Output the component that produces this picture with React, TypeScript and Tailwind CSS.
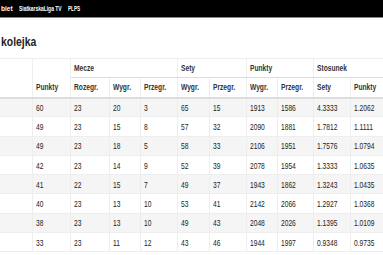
const COLS = [32, 38, 39, 31, 37, 32, 37, 31, 36, 37, 40];

const ROWS: string[][] = [
  ["60", "23", "20", "3", "65", "15", "1913", "1586", "4.3333", "1.2062"],
  ["49", "23", "15", "8", "57", "32", "2090", "1881", "1.7812", "1.1111"],
  ["49", "23", "18", "5", "58", "33", "2106", "1951", "1.7576", "1.0794"],
  ["42", "23", "14", "9", "52", "39", "2078", "1954", "1.3333", "1.0635"],
  ["41", "22", "15", "7", "49", "37", "1943", "1862", "1.3243", "1.0435"],
  ["40", "23", "13", "10", "53", "41", "2142", "2066", "1.2927", "1.0368"],
  ["38", "23", "13", "10", "49", "43", "2048", "2026", "1.1395", "1.0109"],
  ["33", "23", "11", "12", "43", "46", "1944", "1997", "0.9348", "0.9735"],
];

const SUB = ["Rozegr.", "Wygr.", "Przegr.", "Wygr.", "Przegr.", "Wygr.", "Przegr.", "Sety", "Punkty"];

// the site uses a condensed face; squeeze a regular one to match
function Narrow({ children }: { children: React.ReactNode }) {
  return <span className="inline-block origin-left scale-x-[0.74] whitespace-nowrap">{children}</span>;
}

export default function App() {
  return (
    <div
      className="w-[383px] h-[255px] overflow-hidden bg-white text-[#333]"
      style={{ fontFamily: '"Liberation Sans", Arial, sans-serif' }}
    >
      {/* top nav strip */}
      <nav className="flex h-[18px] items-center border-b border-[#888] bg-black pl-px text-[6.5px] font-bold text-white">
        <span className="w-[13px] whitespace-nowrap">biet</span>
        <span className="ml-[5px] w-[45px] whitespace-nowrap">
          <span className="inline-block origin-left scale-x-[0.76]">SiatkarskaLiga TV</span>
        </span>
        <span className="ml-[4px] w-[13px] whitespace-nowrap">
          <span className="inline-block origin-left scale-x-[0.72]">PLPS</span>
        </span>
      </nav>

      <h2 className="mt-[17px] h-[23px] pl-px text-[13px] font-bold leading-[14px] text-[#222]">
        <span className="inline-block origin-left scale-x-[0.8]">kolejka</span>
      </h2>

      <table className="w-[390px] table-fixed border-collapse text-[9px] leading-[10px]">
        <colgroup>
          {COLS.map((w, i) => (
            <col key={i} style={{ width: w }} />
          ))}
        </colgroup>
        <thead className="text-[#333]">
          <tr className="h-[19px]">
            <th rowSpan={2} className="border border-[#eee] border-l-0 border-b-2 border-b-[#ddd]" />
            <th
              rowSpan={2}
              className="border border-[#eee] border-b-2 border-b-[#ddd] px-[3px] pb-[5px] text-left align-bottom font-semibold"
            >
              <Narrow>Punkty</Narrow>
            </th>
            <th colSpan={3} className="border border-[#eee] border-b-[#ddd] px-[3px] text-left font-semibold">
              <Narrow>Mecze</Narrow>
            </th>
            <th colSpan={2} className="border border-[#eee] border-b-[#ddd] px-[3px] text-left font-semibold">
              <Narrow>Sety</Narrow>
            </th>
            <th colSpan={2} className="border border-[#eee] border-b-[#ddd] px-[3px] text-left font-semibold">
              <Narrow>Punkty</Narrow>
            </th>
            <th colSpan={2} className="border border-[#eee] border-b-[#ddd] px-[3px] text-left font-semibold">
              <Narrow>Stosunek</Narrow>
            </th>
          </tr>
          <tr className="h-[20px]">
            {SUB.map((s, i) => (
              <th
                key={i}
                className="border border-[#eee] border-b-2 border-b-[#ddd] px-[3px] text-left font-semibold"
              >
                <Narrow>{s}</Narrow>
              </th>
            ))}
          </tr>
        </thead>
        <tbody className="text-[#222]">
          {ROWS.map((r, i) => (
            <tr key={i} className={`h-[19.3px] ${i % 2 === 0 ? "bg-[#f5f5f5]" : "bg-white"}`}>
              <td className="border border-[#eee] border-l-0" />
              {r.map((v, j) => (
                <td key={j} className="border border-[#eee] px-[3px] pt-px">
                  <Narrow>{v}</Narrow>
                </td>
              ))}
            </tr>
          ))}
        </tbody>
      </table>
    </div>
  );
}
